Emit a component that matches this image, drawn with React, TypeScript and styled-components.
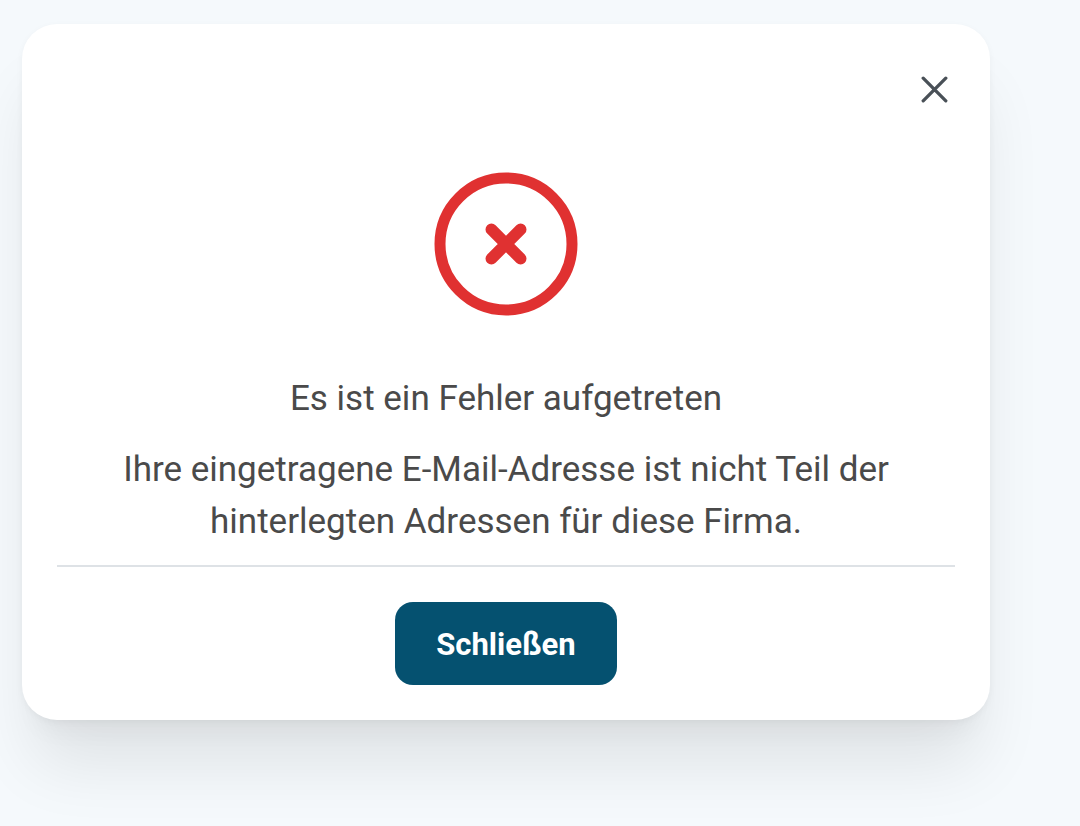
import React, { useState } from "react";
import styled, { createGlobalStyle } from "styled-components";

const GlobalStyle = createGlobalStyle`
  *, *::before, *::after { box-sizing: border-box; }
  body { margin: 0; background: #f5f9fc; font-family: Roboto, "Liberation Sans", sans-serif; color: #4a4a4a; }
`;

const Page = styled.main`
  min-height: 100vh;
  padding: 24px 90px 106px 22px;
  overflow: hidden;
`;

const Dialog = styled.section`
  display: flex;
  flex-direction: column;
  padding: 35px;
  border-radius: 35px;
  background: #ffffff;
  box-shadow: 0 2px 7px rgba(0, 0, 0, 0.04), 0 55px 66px -11px rgba(0, 0, 0, 0.09), 0 22px 26px -12px rgba(0, 0, 0, 0.04);
`;

const CloseButton = styled.button`
  display: flex;
  align-self: flex-end;
  margin-top: 11px;
  padding: 6px;
  border: 0;
  background: transparent;
  color: #495057;
  cursor: pointer;
`;

const Body = styled.div`
  display: flex;
  flex-direction: column;
  align-items: center;
  padding: 62px 60px 17px;
  border-bottom: 2px solid #dee2e6;
  text-align: center;
`;

const Title = styled.h1`
  margin: 56px 0 18px;
  font-size: 35px;
  font-weight: 400;
  line-height: 54px;
`;

const Message = styled.p`
  margin: 0;
  font-size: 35px;
  line-height: 52px;
`;

const Footer = styled.footer`
  display: flex;
  justify-content: center;
  padding-top: 35px;
`;

const PrimaryButton = styled.button`
  padding: 17px 41px 15px;
  border: 0;
  border-radius: 18px;
  background: #055170;
  color: #ffffff;
  font-family: inherit;
  font-size: 31px;
  font-weight: 700;
  line-height: 51px;
  cursor: pointer;
`;

export default function App() {
  const [open, setOpen] = useState(true);
  const close = () => setOpen(false);

  return (
    <Page>
      <GlobalStyle />
      {open && (
        <Dialog role="alertdialog" aria-labelledby="error-title" aria-describedby="error-message">
          <CloseButton type="button" aria-label="Dialog schließen" onClick={close}>
            <svg width="28" height="28" viewBox="0 0 28 28" fill="none" stroke="currentColor" strokeWidth="3.3" strokeLinecap="round">
              <path d="M2.2 2.2 24.8 24.8M24.8 2.2 2.2 24.8" />
            </svg>
          </CloseButton>
          <Body>
            <svg width="144" height="144" viewBox="0 0 144 144" fill="none" stroke="#e03131" aria-hidden="true">
              <circle cx="72" cy="72" r="66" strokeWidth="11" />
              <path d="M57.4 57.4 86.6 86.6M86.6 57.4 57.4 86.6" strokeWidth="11.8" strokeLinecap="round" />
            </svg>
            <Title id="error-title">Es ist ein Fehler aufgetreten</Title>
            <Message id="error-message">
              Ihre eingetragene E-Mail-Adresse ist nicht Teil der hinterlegten Adressen für diese Firma.
            </Message>
          </Body>
          <Footer>
            <PrimaryButton type="button" onClick={close}>Schließen</PrimaryButton>
          </Footer>
        </Dialog>
      )}
    </Page>
  );
}
